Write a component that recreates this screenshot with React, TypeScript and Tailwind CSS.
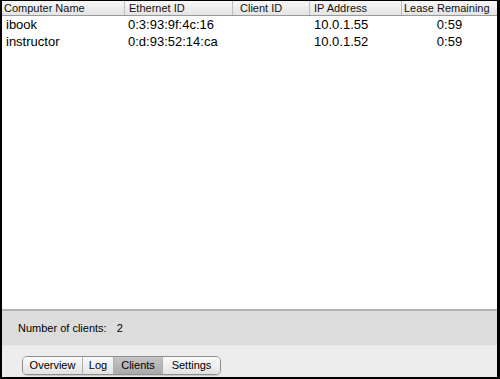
import * as React from 'react';

type Col = { title: string; width: string; headPad: string; cellClass: string };

const cols: Col[] = [
  { title: "Computer Name", width: "w-[123px]", headPad: "pl-[2px]", cellClass: "pl-[4px] text-left" },
  { title: "Ethernet ID", width: "w-[108px]", headPad: "pl-[4px]", cellClass: "pl-[3px] text-left" },
  { title: "Client ID", width: "w-[77px]", headPad: "pl-[7px]", cellClass: "pl-[4px] text-left" },
  { title: "IP Address", width: "w-[92px]", headPad: "pl-[4px]", cellClass: "pl-[4px] text-left" },
  { title: "Lease Remaining", width: "w-[95px]", headPad: "pl-[2px]", cellClass: "text-center" },
];

const rows = [
  ["ibook", "0:3:93:9f:4c:16", "", "10.0.1.55", "0:59"],
  ["instructor", "0:d:93:52:14:ca", "", "10.0.1.52", "0:59"],
];

const tabs = [
  { label: "Overview", w: "w-[59px]" },
  { label: "Log", w: "w-[31px]" },
  { label: "Clients", w: "w-[49px]", active: true },
  { label: "Settings", w: "w-[58px]" },
];

export default function App() {
  return (
    <div
      className="w-[500px] h-[379px] flex flex-col bg-white border-t border-l-2 border-r-[3px] border-b-2 border-black text-black overflow-hidden"
      style={{ fontFamily: '"Liberation Sans", Arial, sans-serif' }}
    >
      {/* table */}
      <div className="flex-1 flex flex-col bg-white">
        <div className="flex h-[15px] bg-gradient-to-b from-[#f7f7f7] to-[#e4e4e4] border-b border-[#9a9a9a] text-[11px] leading-[14px] text-[#111]">
          {cols.map((c, i) => (
            <div
              key={c.title}
              className={`${c.width} ${c.headPad} shrink-0 ${i < cols.length - 1 ? "border-r border-[#bdbdbd]" : ""} whitespace-nowrap`}
            >
              {c.title}
            </div>
          ))}
        </div>
        {rows.map((r, ri) => (
          <div key={ri} className="flex h-[17px] text-[13px] leading-[18px]">
            {r.map((v, ci) => (
              <div key={ci} className={`${cols[ci].width} ${cols[ci].cellClass} shrink-0 whitespace-nowrap`}>
                {v}
              </div>
            ))}
          </div>
        ))}
      </div>

      {/* status band */}
      <div className="h-[37px] shrink-0 bg-[#dcdcdc] border-t-2 border-[#b4b4b4] border-b border-b-[#e6e6e6] flex items-center pl-[16px] text-[11px]">
        <span>Number of clients:</span>
        <span className="ml-[10px]">2</span>
      </div>

      {/* tab bar */}
      <div className="h-[31px] shrink-0 bg-[#ededed] flex items-start pt-[10px] pl-[20px]">
        <div className="flex h-[19px] rounded-[5px] border border-[#8e8e8e] overflow-hidden shadow-[0_1px_1px_rgba(0,0,0,0.15)] text-[11px] leading-[17px]">
          {tabs.map((t, i) => (
            <div
              key={t.label}
              className={`${t.w} text-center ${i > 0 ? "border-l border-[#b0b0b0]" : ""} ${
                t.active
                  ? "bg-gradient-to-b from-[#c4c4c4] to-[#a9a9a9]"
                  : "bg-gradient-to-b from-[#fbfbfb] to-[#e2e2e2]"
              }`}
            >
              {t.label}
            </div>
          ))}
        </div>
      </div>
    </div>
  );
}
